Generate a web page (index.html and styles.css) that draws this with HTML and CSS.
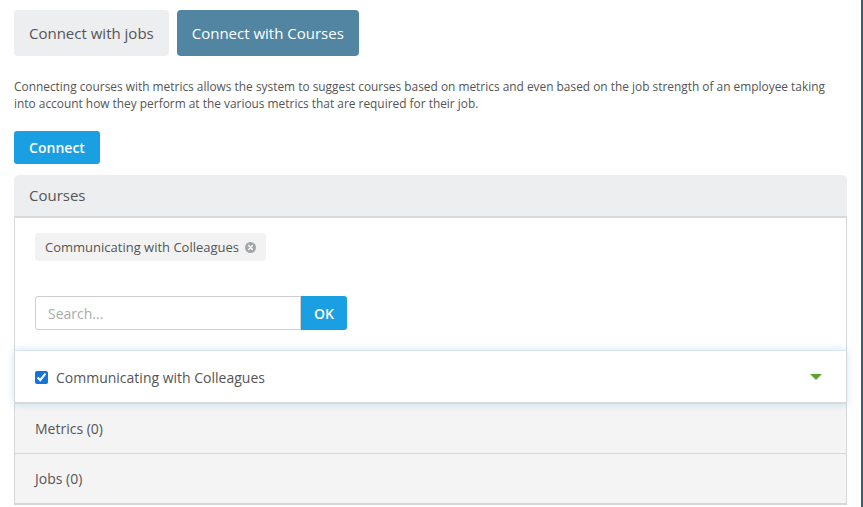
FILE: index.html
```html
<!DOCTYPE html>
<html lang="en">
<head>
    <meta charset="UTF-8">
    <meta name="viewport" content="width=device-width, initial-scale=1.0">
    <title>Connect Courses</title>
    <link rel="stylesheet" href="styles.css">
</head>
<body>
    <div class="modal">
        <div class="tabs">
            <button class="tab">Connect with jobs</button>
            <button class="tab active">Connect with Courses</button>
        </div>
        <p class="intro">Connecting courses with metrics allows the system to suggest courses based on metrics and even based on the job strength of an employee taking into account how they perform at the various metrics that are required for their job.</p>
        <button class="btn-connect">Connect</button>

        <div class="panel">
            <div class="panel-header">Courses</div>
            <div class="panel-body">
                <div class="tags">
                    <span class="tag">Communicating with Colleagues
                        <svg class="tag-close" width="11" height="11" viewBox="0 0 11 11">
                            <circle cx="5.5" cy="5.5" r="5.5" fill="#a3a6a9"/>
                            <path d="M3.6 3.6 L7.4 7.4 M7.4 3.6 L3.6 7.4" stroke="#fff" stroke-width="1.4" stroke-linecap="round"/>
                        </svg>
                    </span>
                </div>
                <div class="search">
                    <input type="text" placeholder="Search...">
                    <button>OK</button>
                </div>
            </div>
            <div class="item selected">
                <label><input type="checkbox" checked> Communicating with Colleagues</label>
                <span class="caret"></span>
            </div>
            <div class="item sub">Metrics (0)</div>
            <div class="item sub last">Jobs (0)</div>
        </div>
    </div>
</body>
</html>
```

FILE: styles.css
```css
html, body {
    margin: 0;
    height: 100%;
    overflow: hidden;
}
body {
    font-family: 'Open Sans', 'Noto Sans', sans-serif;
    background: #fff;
    color: #555;
}
.modal {
    box-sizing: border-box;
    width: 863px;
    height: 507px;
    padding: 10px 14px 0 14px;
    border-right: 2px solid #3d5e72;
}
.tabs {
    display: flex;
    gap: 8px;
}
.tab {
    height: 46px;
    padding: 0 15px;
    border: none;
    border-radius: 4px;
    background: #edeef0;
    color: #555;
    font-family: inherit;
    font-size: 15px;
}
.tab.active {
    background: #5185a1;
    color: #fff;
}
.intro {
    margin: 22px 0 0;
    font-size: 11.9px;
    line-height: 17px;
    color: #555;
}
.btn-connect {
    display: block;
    margin-top: 19px;
    height: 33px;
    width: 86px;
    border: none;
    border-radius: 3px;
    background: #1a9fe2;
    color: #fff;
    font-family: inherit;
    font-size: 14px;
    font-weight: 600;
}
.panel {
    margin-top: 11px;
}
.panel-header {
    height: 41px;
    line-height: 41px;
    padding-left: 15px;
    background: #edeef0;
    border-radius: 5px 5px 0 0;
    border-bottom: 2px solid #d9d9d9;
    font-size: 15px;
    color: #555;
}
.panel-body {
    border-left: 1px solid #d6d6d6;
    border-right: 1px solid #d6d6d6;
    padding: 15px 20px 20px;
}
.tags {
    display: flex;
    margin-bottom: 35px;
}
.tag {
    display: inline-flex;
    align-items: center;
    gap: 6px;
    height: 28px;
    padding: 0 10px;
    background: #f2f2f2;
    border-radius: 4px;
    font-size: 13px;
    color: #555;
}
.search {
    display: flex;
}
.search input {
    box-sizing: border-box;
    width: 266px;
    height: 34px;
    padding: 0 12px;
    border: 1px solid #cfcfcf;
    border-radius: 3px 0 0 3px;
    font-family: inherit;
    font-size: 14px;
    outline: none;
}
.search input::placeholder {
    color: #aaa;
}
.search button {
    width: 46px;
    height: 34px;
    border: none;
    border-radius: 0 3px 3px 0;
    background: #1a9fe2;
    color: #fff;
    font-family: inherit;
    font-size: 14px;
    font-weight: 600;
}
.item {
    display: flex;
    align-items: center;
    justify-content: space-between;
    height: 49px;
    padding: 0 20px;
    border-left: 1px solid #d6d6d6;
    border-right: 1px solid #d6d6d6;
    border-bottom: 1px solid #d6d6d6;
    background: #f4f4f4;
    font-size: 14px;
    color: #555;
}
.item.selected {
    position: relative;
    box-sizing: content-box;
    height: 50px;
    padding-top: 1px;
    background: #fff;
    border-top: 1px solid #d6e6f2;
    border-bottom: 2px solid #d9d9d9;
    box-shadow: 0 0 8px rgba(26, 140, 220, 0.22);
}
.item.last {
    border-bottom-width: 2px;
}
.item label {
    display: flex;
    align-items: center;
    gap: 8px;
}
.item input[type="checkbox"] {
    margin: 0;
    width: 13px;
    height: 13px;
    accent-color: #1574dc;
}
.caret {
    width: 0;
    height: 0;
    margin-right: 4px;
    border-left: 6px solid transparent;
    border-right: 6px solid transparent;
    border-top: 6px solid #5ba42a;
}
```
